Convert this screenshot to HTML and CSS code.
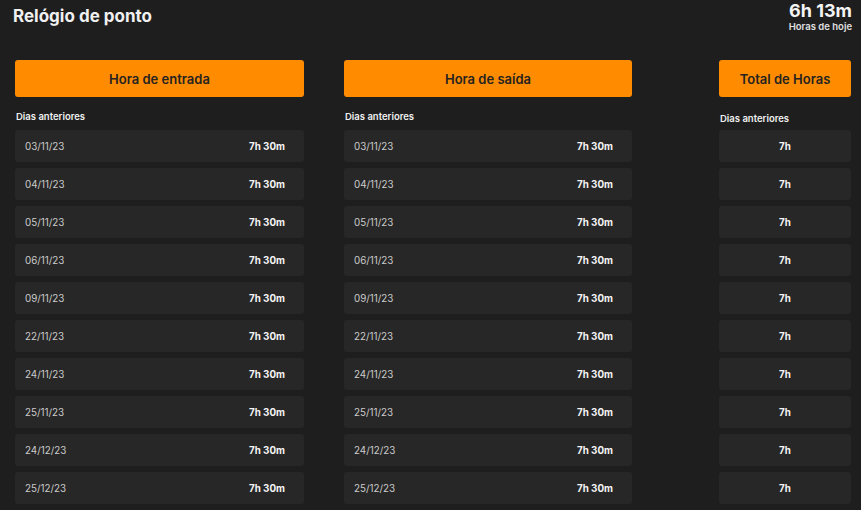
FILE: index.html
```html
<!DOCTYPE html>
<html lang="pt">
<head>
<meta charset="utf-8">
<title>Relógio de ponto</title>
<link rel="stylesheet" href="styles.css">
</head>
<body>
<header class="top">
  <h1 class="title">Relógio de ponto</h1>
  <div class="today">
    <div class="today-value">6h 13m</div>
    <div class="today-label">Horas de hoje</div>
  </div>
</header>
<main class="cols">
  <section class="col col-in">
    <button class="btn">Hora de entrada</button>
    <div class="label">Dias anteriores</div>
    <ul class="rows">
      <li class="row"><span class="date">03/11/23</span><span class="time">7h 30m</span></li>
      <li class="row"><span class="date">04/11/23</span><span class="time">7h 30m</span></li>
      <li class="row"><span class="date">05/11/23</span><span class="time">7h 30m</span></li>
      <li class="row"><span class="date">06/11/23</span><span class="time">7h 30m</span></li>
      <li class="row"><span class="date">09/11/23</span><span class="time">7h 30m</span></li>
      <li class="row"><span class="date">22/11/23</span><span class="time">7h 30m</span></li>
      <li class="row"><span class="date">24/11/23</span><span class="time">7h 30m</span></li>
      <li class="row"><span class="date">25/11/23</span><span class="time">7h 30m</span></li>
      <li class="row"><span class="date">24/12/23</span><span class="time">7h 30m</span></li>
      <li class="row"><span class="date">25/12/23</span><span class="time">7h 30m</span></li>
    </ul>
  </section>
  <section class="col col-out">
    <button class="btn">Hora de saída</button>
    <div class="label">Dias anteriores</div>
    <ul class="rows">
      <li class="row"><span class="date">03/11/23</span><span class="time">7h 30m</span></li>
      <li class="row"><span class="date">04/11/23</span><span class="time">7h 30m</span></li>
      <li class="row"><span class="date">05/11/23</span><span class="time">7h 30m</span></li>
      <li class="row"><span class="date">06/11/23</span><span class="time">7h 30m</span></li>
      <li class="row"><span class="date">09/11/23</span><span class="time">7h 30m</span></li>
      <li class="row"><span class="date">22/11/23</span><span class="time">7h 30m</span></li>
      <li class="row"><span class="date">24/11/23</span><span class="time">7h 30m</span></li>
      <li class="row"><span class="date">25/11/23</span><span class="time">7h 30m</span></li>
      <li class="row"><span class="date">24/12/23</span><span class="time">7h 30m</span></li>
      <li class="row"><span class="date">25/12/23</span><span class="time">7h 30m</span></li>
    </ul>
  </section>
  <section class="col col-total">
    <button class="btn">Total de Horas</button>
    <div class="label label-total">Dias anteriores</div>
    <ul class="rows">
      <li class="row row-total"><span class="time">7h</span></li>
      <li class="row row-total"><span class="time">7h</span></li>
      <li class="row row-total"><span class="time">7h</span></li>
      <li class="row row-total"><span class="time">7h</span></li>
      <li class="row row-total"><span class="time">7h</span></li>
      <li class="row row-total"><span class="time">7h</span></li>
      <li class="row row-total"><span class="time">7h</span></li>
      <li class="row row-total"><span class="time">7h</span></li>
      <li class="row row-total"><span class="time">7h</span></li>
      <li class="row row-total"><span class="time">7h</span></li>
    </ul>
  </section>
</main>
</body>
</html>
```
FILE: styles.css
```css
* { box-sizing: border-box; }
html, body {
  margin: 0;
  padding: 0;
  background: #1e1e1e;
  color: #f2f2f2;
  font-family: Inter, "Noto Sans", "Liberation Sans", sans-serif;
  overflow: hidden;
}
.top {
  display: flex;
  justify-content: space-between;
  align-items: flex-start;
  padding: 0 9px 0 13px;
  height: 60px;
}
.title {
  margin: 6px 0 0;
  font-size: 17px;
  line-height: 20px;
  font-weight: 700;
  color: #f0f0f0;
}
.today {
  text-align: right;
  padding-top: 1px;
}
.today-value {
  font-size: 18px;
  line-height: 20px;
  font-weight: 700;
  color: #f4f4f4;
}
.today-label {
  font-size: 9.5px;
  line-height: 12px;
  margin-top: 0;
  font-weight: 600;
  color: #e0e0e0;
}
.cols {
  display: flex;
  align-items: flex-start;
  padding-left: 15px;
}
.col-in { width: 289px; }
.col-out { width: 288px; margin-left: 40px; }
.col-total { width: 132px; margin-left: 87px; }
.btn {
  display: block;
  width: 100%;
  height: 37px;
  border: 0;
  border-radius: 3px;
  background: #ff8c00;
  color: #262320;
  font-family: inherit;
  font-size: 13px;
  font-weight: 600;
  padding: 0;
  margin: 0;
}
.label {
  margin-top: 14px;
  height: 19px;
  font-size: 9.5px;
  line-height: 12px;
  font-weight: 600;
  color: #f0f0f0;
  padding-left: 1px;
}
.label-total {
  margin-top: 16px;
  height: 17px;
}
.rows {
  list-style: none;
  margin: 0;
  padding: 0;
  display: flex;
  flex-direction: column;
  gap: 6px;
}
.row {
  height: 32px;
  background: #272727;
  border-radius: 3px;
  display: flex;
  align-items: center;
  justify-content: space-between;
  padding: 0 19px 0 10px;
}
.date {
  font-size: 9.8px;
  color: #cccccc;
}
.time {
  font-size: 9.8px;
  font-weight: 700;
  color: #f4f4f4;
}
.row-total {
  justify-content: center;
  padding: 0;
}
```
